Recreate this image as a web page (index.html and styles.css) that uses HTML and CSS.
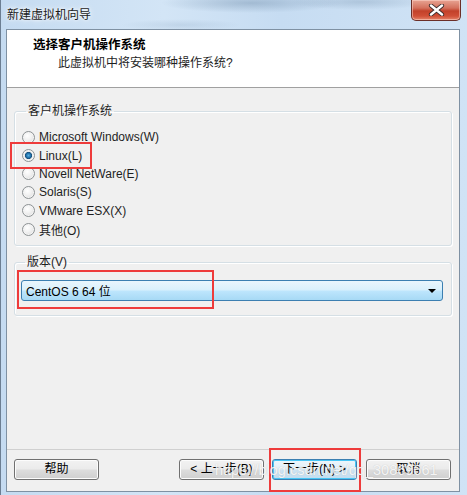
FILE: index.html
```html
<!DOCTYPE html>
<html lang="zh-CN">
<head>
<meta charset="utf-8">
<title>新建虚拟机向导</title>
<link rel="stylesheet" href="styles.css">
</head>
<body>
<div class="window">
  <div class="titlebar">
    <span class="title">新建虚拟机向导</span>
    <div class="close"><svg width="17" height="12" viewBox="0 0 17 12"><path d="M3 1.5 L14 10.5 M14 1.5 L3 10.5" stroke="#3a2a2a" stroke-width="4.2" stroke-linecap="round"/><path d="M3 1.5 L14 10.5 M14 1.5 L3 10.5" stroke="#ffffff" stroke-width="2.4" stroke-linecap="round"/></svg></div>
  </div>
  <div class="client">
    <div class="header">
      <div class="h-title">选择客户机操作系统</div>
      <div class="h-sub">此虚拟机中将安装哪种操作系统?</div>
    </div>
    <div class="content">
      <fieldset class="group group-os">
        <legend>客户机操作系统</legend>
        <div class="radio-row"><span class="radio"></span><span>Microsoft Windows(W)</span></div>
        <div class="radio-row"><span class="radio checked"></span><span>Linux(L)</span></div>
        <div class="radio-row"><span class="radio"></span><span>Novell NetWare(E)</span></div>
        <div class="radio-row"><span class="radio"></span><span>Solaris(S)</span></div>
        <div class="radio-row"><span class="radio"></span><span>VMware ESX(X)</span></div>
        <div class="radio-row"><span class="radio"></span><span>其他(O)</span></div>
      </fieldset>
      <fieldset class="group group-ver">
        <legend>版本(V)</legend>
        <div class="combo">
          <span>CentOS 6 64 位</span>
          <span class="arrow"></span>
        </div>
      </fieldset>
    </div>
    <div class="footer">
      <button class="btn btn-help">帮助</button>
      <button class="btn btn-back">&lt; 上一步(B)</button>
      <button class="btn btn-next">下一步(N) &gt;</button>
      <button class="btn btn-cancel">取消</button>
    </div>
  </div>
  <div class="mark mark-linux"></div>
  <div class="mark mark-ver"></div>
  <div class="mark mark-next"></div>
  <div class="watermark">https://blog.csdn.net/qq_30869661</div>
</div>
</body>
</html>
```

FILE: styles.css
```css
* { box-sizing: border-box; }
html, body { margin: 0; padding: 0; }
body {
  width: 467px;
  height: 495px;
  overflow: hidden;
  font-family: "Liberation Sans", "Noto Sans CJK SC", sans-serif;
  font-size: 12px;
  color: #1e1e1e;
}
.window {
  position: relative;
  width: 467px;
  height: 495px;
  display: flex;
  flex-direction: column;
  background: linear-gradient(90deg, #c5dbf1 0%, #d3e5f6 35%, #c6dcf2 60%, #d0e3f5 100%);
  border-left: 1px solid #6c7e92;
}
.titlebar {
  height: 29px;
  flex: none;
  display: flex;
  align-items: flex-start;
  justify-content: space-between;
  padding-left: 6px;
  background:
    radial-gradient(ellipse 90px 10px at 250px 3px, rgba(90,120,150,0.35), transparent),
    radial-gradient(ellipse 70px 8px at 360px 2px, rgba(90,120,150,0.25), transparent),
    radial-gradient(ellipse 60px 6px at 180px 25px, rgba(120,150,180,0.2), transparent);
}
.title {
  margin-top: 7px;
  line-height: 16px;
  font-size: 12px;
  color: #1b1b1b;
  text-shadow: 0 0 6px #ffffff, 0 0 3px #ffffff;
}
.close {
  width: 50px;
  height: 21px;
  margin-right: 6px;
  border: 1px solid #6b2f28;
  border-top: none;
  border-radius: 0 0 5px 5px;
  background: linear-gradient(#e8a493 0%, #d4715d 40%, #c2412a 55%, #d04f36 80%, #e4856c 100%);
  box-shadow: inset 0 0 0 1px rgba(255,220,210,0.5);
  display: flex;
  align-items: center;
  justify-content: center;
}
.close svg { display: block; }
.client {
  flex: 1;
  margin: 0 7px 3px 5px;
  border: 1px solid #7f91a3;
  background: #f0f0f0;
  display: flex;
  flex-direction: column;
}
.header {
  height: 58px;
  flex: none;
  background: #ffffff;
  border-bottom: 1px solid #a0a0a0;
  padding: 7px 0 0 26px;
}
.h-title {
  font-weight: bold;
  line-height: 16px;
  font-size: 12.5px;
  color: #000;
}
.h-sub {
  margin: 2px 0 0 25px;
  line-height: 16px;
  color: #1e1e1e;
}
.content {
  flex: 1;
  padding: 15px 7px 0 7px;
}
.group {
  margin: 0;
  border: 1px solid #d5dfe5;
  border-radius: 3px;
  box-shadow: inset 1px 1px 0 #ffffff, 1px 1px 0 #ffffff;
  min-width: 0;
}
.group legend {
  padding: 0 2px;
  margin-left: 4px;
  line-height: 16px;
  color: #1e1e1e;
}
.group-os {
  padding: 9px 0 7px 7px;
}
.radio-row {
  height: 18.4px;
  display: flex;
  align-items: center;
  gap: 4px;
}
.radio {
  width: 13px;
  height: 13px;
  border-radius: 50%;
  border: 1px solid #8d9294;
  background: radial-gradient(circle at 40% 35%, #ffffff 0%, #f2f2f2 40%, #d6d6d6 100%);
  box-shadow: inset 0 0 0 1px #f4f4f4;
  flex: none;
}
.radio.checked {
  background: radial-gradient(circle at 50% 50%, #5ab0e0 0%, #1f6fa8 30%, #1a4f78 42%, #eaeaea 50%, #f8f8f8 70%, #d4d4d4 100%);
}
.group-ver {
  margin-top: 8px;
  padding: 10px 8px 14px 6px;
}
.combo {
  height: 21px;
  border: 1px solid #3c7fb1;
  border-radius: 3px;
  background: linear-gradient(#eaf6fd 0%, #d9f0fc 48%, #bee6fd 52%, #a7d9f5 100%);
  display: flex;
  align-items: center;
  justify-content: space-between;
  padding: 0 6px 0 4px;
  color: #000;
}
.arrow {
  width: 0;
  height: 0;
  border-left: 4px solid transparent;
  border-right: 4px solid transparent;
  border-top: 4px solid #000;
  margin-top: 1px;
}
.footer {
  flex: none;
  border-top: 1px solid #d0d0d0;
  padding: 9px 8px 11px 7px;
  display: flex;
  align-items: flex-start;
}
.btn {
  width: 85px;
  height: 21px;
  margin: 0;
  padding: 0;
  font: inherit;
  font-size: 12px;
  color: #000;
  border: 1px solid #707070;
  border-radius: 3px;
  background: linear-gradient(#f2f2f2 0%, #ebebeb 48%, #dddddd 52%, #cfcfcf 100%);
  box-shadow: inset 0 0 0 1px #fcfcfc;
  line-height: 17px;
}
.btn-back { margin-left: auto; }
.btn-next {
  margin-left: 8px;
  border-color: #3c7fb1;
  background: linear-gradient(#edf6fb 0%, #e1eff8 48%, #cfe5f3 52%, #c2ddef 100%);
  box-shadow: inset 0 0 0 1px #48c6f5;
}
.btn-cancel { margin-left: 9px; }
.mark {
  position: absolute;
  border: 2px solid #ee3b3b;
  pointer-events: none;
}
.mark-linux { left: 9px; top: 142px; width: 82px; height: 27px; }
.mark-ver { left: 16px; top: 270px; width: 197px; height: 39px; }
.mark-next { left: 268px; top: 448px; width: 92px; height: 44px; }
.watermark {
  position: absolute;
  left: 214px;
  top: 462px;
  font-family: "Liberation Sans", Arial, sans-serif;
  font-size: 14.5px;
  line-height: 17px;
  color: rgba(255,255,255,0.85);
  text-shadow: 0 0 1px rgba(150,150,150,0.5);
  pointer-events: none;
  white-space: nowrap;
}
```
